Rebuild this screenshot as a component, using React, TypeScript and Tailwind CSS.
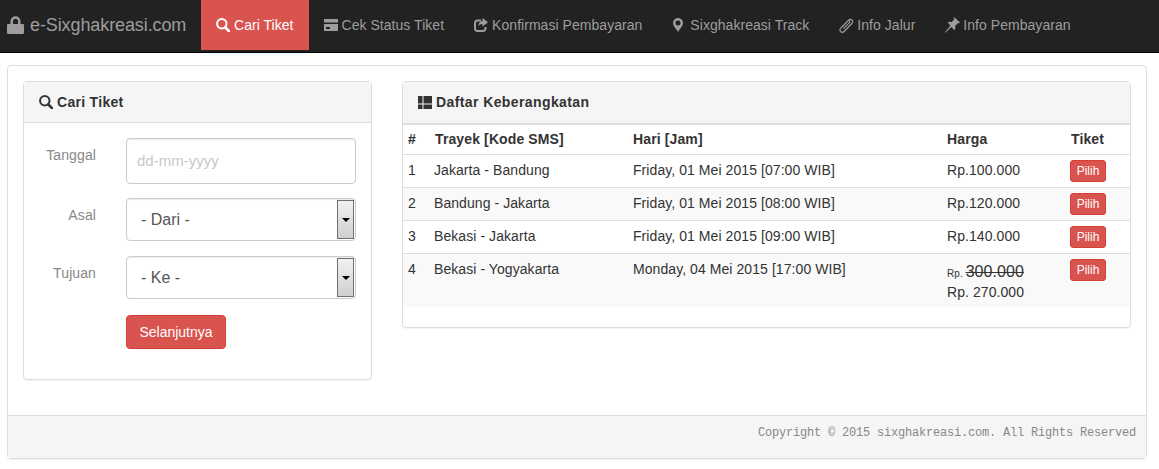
import React from "react";

const Search = ({ className }: { className: string }) => (
  <svg viewBox="0 0 14 14" className={className} fill="none" stroke="currentColor">
    <circle cx="5.800" cy="5.800" r="4.700" strokeWidth="2" />
    <path d="M9.200 9.300l4 4.100" strokeWidth="2.600" strokeLinecap="round" />
  </svg>
);

const Card = () => (
  <svg viewBox="0 0 14 12" className="h-[12px] w-[14px]" fill="currentColor">
    <path d="M0 0h14v3.500H0zM0 5h14v7H0zM2 8v2h4V8z" fillRule="evenodd" />
  </svg>
);

const Share = () => (
  <svg viewBox="0 0 14 14" className="h-[14px] w-[14px]" fill="none" stroke="currentColor">
    <path d="M7 2.500H3.500A2.500 2.500 0 0 0 1 5v5.500A2.500 2.500 0 0 0 3.500 13H9a2.500 2.500 0 0 0 2.500-2.500V9" strokeWidth="2" />
    <path d="M8.500 0L14 4.300 8.500 8.600V6C6.500 6 5 6.800 4.200 8.500 4.400 5.300 6 3.200 8.500 3z" fill="currentColor" stroke="none" />
  </svg>
);

const Marker = () => (
  <svg viewBox="0 0 12 14" className="h-[14px] w-[12px]" fill="currentColor">
    <path d="M6 0a5 5 0 0 0-5 5c0 3 3.300 5.800 5 9 1.700-3.200 5-6 5-9a5 5 0 0 0-5-5zm0 2.500a2.500 2.500 0 1 1 0 5 2.500 2.500 0 0 1 0-5z" fillRule="evenodd" />
  </svg>
);

const Clip = () => (
  <svg viewBox="0 0 15 15" className="h-[15px] w-[15px]" fill="none" stroke="currentColor" strokeWidth="1.200">
    <path d="M3 9l6-6.300c1.500-1.500 3-1.700 4-.7s.8 2.600-.6 4l-6.800 7c-1.500 1.500-3 1.600-4 .6s-.8-2.500.6-4l6.300-6.500c.8-.7 1.500-.8 2-.3s.4 1.300-.3 2L4.500 10.700" />
  </svg>
);

const Pin = () => (
  <svg viewBox="0 0 15 16" className="h-[16px] w-[15px]" fill="currentColor">
    <path d="M9 0l6 5.500-1 .8-1-.4-2.800 2.900.2 3.200-1.200 1-2.900-3L.4 15.700 0 15.300 5.500 8.600 2.800 5.800l1-1.100 3 .4L9.400 2 8.500.7z" />
  </svg>
);

const Lock = () => (
  <svg viewBox="0 0 17 18" className="mr-[6px] h-[18px] w-[17px] shrink-0" fill="currentColor">
    <path d="M3.500 8V5.200a5 5 0 0 1 10 0V8h2.300c.7 0 1.200.5 1.200 1.200v7.600c0 .7-.5 1.200-1.200 1.200H1.200C.5 18 0 17.500 0 16.800V9.200C0 8.500.5 8 1.200 8zM6 8h5V5.200a2.500 2.500 0 0 0-5 0z" fillRule="evenodd" />
  </svg>
);

const Blocks = () => (
  <svg viewBox="0 0 14 13" className="mr-[4px] h-[13px] w-[14px]" fill="currentColor">
    <path d="M0 0h4.500v7.500H0zM0 8.500h4.500V13H0zM5.500 0H14v7.500H5.500zM5.500 8.500H14V13H5.500z" />
  </svg>
);

const navItems = [
  { label: "Cek Status Tiket", icon: <Card /> },
  { label: "Konfirmasi Pembayaran", icon: <Share /> },
  { label: "Sixghakreasi Track", icon: <Marker /> },
  { label: "Info Jalur", icon: <Clip /> },
  { label: "Info Pembayaran", icon: <Pin /> },
];

const rows = [
  { no: 1, route: "Jakarta - Bandung", date: "Friday, 01 Mei 2015 [07:00 WIB]", price: "Rp.100.000" },
  { no: 2, route: "Bandung - Jakarta", date: "Friday, 01 Mei 2015 [08:00 WIB]", price: "Rp.120.000" },
  { no: 3, route: "Bekasi - Jakarta", date: "Friday, 01 Mei 2015 [09:00 WIB]", price: "Rp.140.000" },
];

const PickButton = () => (
  <button className="block h-[22px] w-[36px] rounded-[3px] border border-[#d43f3a] bg-[#d9534f] text-[12px] leading-[18px] tracking-normal text-white">
    Pilih
  </button>
);

const FakeSelect = ({ text }: { text: string }) => (
  <div className="flex h-[43px] items-center justify-between rounded-[4px] border border-[#ccc] pl-[14px] pr-px shadow-[inset_0_1px_1px_rgba(0,0,0,0.075)]">
    <span className="text-[16px] text-[#555]">{text}</span>
    <span className="flex h-[39px] w-[17px] items-center justify-center border border-[#707070] bg-gradient-to-b from-[#f2f2f2] to-[#cfcfcf]">
      <span className="h-0 w-0 border-x-[4px] border-t-[4px] border-x-transparent border-t-black" />
    </span>
  </div>
);

export default function App() {
  return (
    <div className="min-h-[469px] bg-white font-['Liberation_Sans',Arial,sans-serif] text-[14px] text-[#333]">
      <nav className="flex h-[53px] items-start border-b border-black bg-[#222] tracking-[0.04px] text-[#9d9d9d]">
        <div className="flex h-[50px] w-[201px] items-center pl-[7px] text-[18px] tracking-[-0.1px]">
          <Lock />
          e-Sixghakreasi.com
        </div>
        <a className="flex h-[50px] items-center bg-[#d9534f] px-[15px] text-white">
          <span className="w-[18px]">
            <Search className="h-[14px] w-[14px]" />
          </span>
          Cari Tiket
        </a>
        {navItems.map((item) => (
          <a key={item.label} className="flex h-[50px] items-center px-[15px]">
            <span className="w-[18px]">{item.icon}</span>
            {item.label}
          </a>
        ))}
      </nav>

      <div className="mt-[12px] mr-[12px] ml-[7px] rounded-[4px] border border-[#ddd] shadow-[0_1px_1px_rgba(0,0,0,0.05)]">
        <div className="flex items-start gap-[30px] px-[15px] pt-[15px] pb-[35px]">
          <section className="w-[349px] rounded-[4px] border border-[#ddd] shadow-[0_1px_1px_rgba(0,0,0,0.05)]">
            <h3 className="flex h-[41px] items-center border-b border-[#ddd] bg-[#f5f5f5] pl-[15px] font-bold tracking-[0.3px]">
              <Search className="mr-[4px] h-[14px] w-[14px]" />
              Cari Tiket
            </h3>
            <div className="px-[15px] pt-[15px] pb-[30px]">
              <div className="flex">
                <label className="w-[57px] pt-[7px] text-right tracking-[0.1px] text-[#888]">Tanggal</label>
                <input
                  placeholder="dd-mm-yyyy"
                  className="ml-[30px] h-[46px] w-[230px] rounded-[4px] border border-[#ccc] px-[10px] pb-[2px] text-[15px] shadow-[inset_0_1px_1px_rgba(0,0,0,0.075)] placeholder:text-[#c8c8c8]"
                />
              </div>
              <div className="mt-[14px] flex">
                <label className="w-[57px] pt-[7px] text-right tracking-[0.1px] text-[#888]">Asal</label>
                <div className="ml-[30px] w-[230px]">
                  <FakeSelect text="- Dari -" />
                </div>
              </div>
              <div className="mt-[15px] flex">
                <label className="w-[57px] pt-[7px] text-right tracking-[0.1px] text-[#888]">Tujuan</label>
                <div className="ml-[30px] w-[230px]">
                  <FakeSelect text="- Ke -" />
                </div>
              </div>
              <button className="mt-[16px] ml-[87px] block h-[34px] w-[100px] rounded-[4px] border border-[#d43f3a] bg-[#d9534f] text-white">
                Selanjutnya
              </button>
            </div>
          </section>

          <section className="w-[729px] rounded-[4px] border border-[#ddd] pb-[20px] shadow-[0_1px_1px_rgba(0,0,0,0.05)]">
            <h3 className="flex h-[41px] items-center bg-[#f5f5f5] pl-[15px] font-bold tracking-[0.4px]">
              <Blocks />
              Daftar Keberangkatan
            </h3>
            <table className="w-full table-fixed border-separate border-spacing-0 text-left">
              <thead>
                <tr className="font-bold tracking-[0.12px] [&>th]:h-[32px] [&>th]:border-t-2 [&>th]:border-b [&>th]:border-[#ddd] [&>th]:pl-[4px]">
                  <th className="w-[27px] !pl-[5px]">#</th>
                  <th className="w-[199px] !pl-[5px]">Trayek [Kode SMS]</th>
                  <th className="w-[314px]">Hari [Jam]</th>
                  <th className="w-[123px]">Harga</th>
                  <th className="!pl-[5px]">Tiket</th>
                </tr>
              </thead>
              <tbody className="tracking-[0.07px]">
                {rows.map((row, i) => (
                  <tr
                    key={row.no}
                    className={`${i % 2 === 1 ? "bg-[#f9f9f9]" : ""} [&>td]:h-[33px] [&>td]:border-b [&>td]:border-[#ddd] [&>td]:pl-[4px]`}
                  >
                    <td className="!pl-[5px] pb-[2px]">{row.no}</td>
                    <td className="pb-[2px]">{row.route}</td>
                    <td className="pb-[2px]">{row.date}</td>
                    <td className="pb-[2px]">{row.price}</td>
                    <td>
                      <PickButton />
                    </td>
                  </tr>
                ))}
                <tr className="bg-[#f9f9f9] align-top [&>td]:h-[53px] [&>td]:pt-[5px] [&>td]:pl-[4px]">
                  <td className="!pl-[5px]">4</td>
                  <td>Bekasi - Yogyakarta</td>
                  <td>Monday, 04 Mei 2015 [17:00 WIB]</td>
                  <td className="!pt-[8px] leading-[19px]">
                    <span className="text-[10px]">Rp. </span>
                    <s className="text-[16px]">300.000</s>
                    <br />
                    Rp. 270.000
                  </td>
                  <td>
                    <PickButton />
                  </td>
                </tr>
              </tbody>
            </table>
          </section>
        </div>
        <footer className="flex h-[43px] justify-end border-t border-[#ddd] bg-[#f5f5f5] pt-[8px] pr-[10px] font-['Liberation_Mono',monospace] text-[12px] tracking-[-0.2px] text-[#888]">
          Copyright © 2015 sixghakreasi.com. All Rights Reserved
        </footer>
      </div>
    </div>
  );
}
